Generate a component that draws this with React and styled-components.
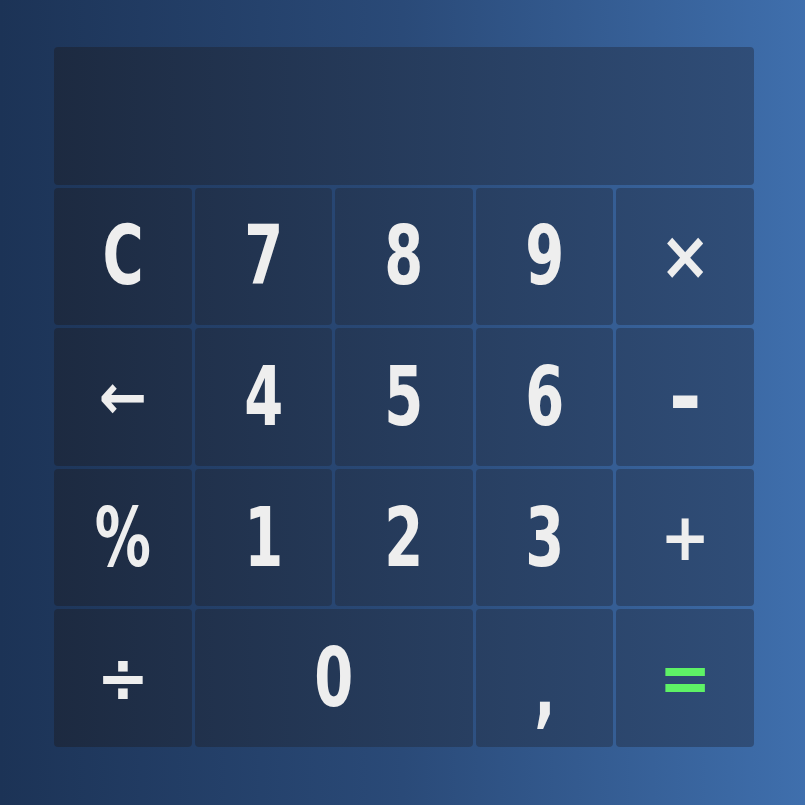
import React from "react";
import styled, { createGlobalStyle } from "styled-components";

const GlobalStyle = createGlobalStyle`
  html, body {
    margin: 0;
    padding: 0;
  }
  body {
    min-height: 100vh;
    background: linear-gradient(to right, #1c3356 0%, #2a4a78 50%, #3f6fad 100%);
    font-family: "DejaVu Sans Condensed", "DejaVu Sans", sans-serif;
  }
`;

// size: font size for symbol keys (they are drawn at full width)
const keys = [
  { label: "C" },
  { label: "7" },
  { label: "8" },
  { label: "9" },
  { label: "×", size: 68 },
  { label: "←", size: 64 },
  { label: "4" },
  { label: "5" },
  { label: "6" },
  { label: "-", size: 88 },
  { label: "%" },
  { label: "1" },
  { label: "2" },
  { label: "3" },
  { label: "+", size: 66 },
  { label: "÷", size: 70 },
  { label: "0", span: 2 },
  { label: ",", comma: true },
  { label: "=", equals: true, size: 70 },
];

const App = () => {
  return (
    <>
      <GlobalStyle />
      <Page>
        <Calculator>
          <Display />
          {keys.map((k, i) => (
            <Key key={i} $span={k.span} $equals={k.equals}>
              <Label $size={k.size} $comma={k.comma}>
                {k.label}
              </Label>
            </Key>
          ))}
        </Calculator>
      </Page>
    </>
  );
};

export default App;

const Page = styled.div`
  padding: 47px 0 0 54px;
`;

const Calculator = styled.div`
  width: 700px;
  display: grid;
  grid-template-columns: repeat(5, 1fr);
  grid-template-rows: repeat(5, 137.6px);
  gap: 3px;
`;

const panelBg = `
  background: linear-gradient(to right, #1b273c 0%, #31507c 100%);
  background-attachment: fixed;
`;

const Display = styled.div`
  grid-column: 1 / -1;
  border-radius: 4px;
  ${panelBg}
`;

const Key = styled.button`
  grid-column: span ${(p) => p.$span || 1};
  border: none;
  border-radius: 4px;
  padding: 0;
  display: flex;
  align-items: center;
  justify-content: center;
  color: ${(p) => (p.$equals ? "#5ef266" : "#eeeeee")};
  font-family: inherit;
  font-weight: 700;
  font-size: 82px;
  cursor: pointer;
  ${panelBg}
`;

const Label = styled.span`
  display: inline-block;
  line-height: 1;
  font-size: ${(p) => (p.$size ? `${p.$size}px` : "inherit")};
  transform: ${(p) => (p.$size ? "none" : "scaleX(0.76)")};
  ${(p) => p.$comma && "margin-top: 22px;"}
`;
